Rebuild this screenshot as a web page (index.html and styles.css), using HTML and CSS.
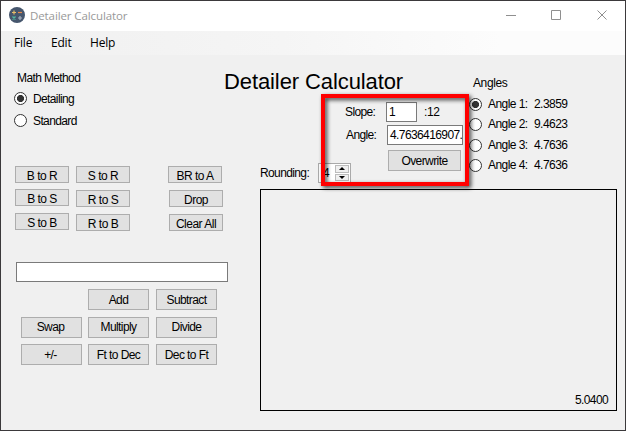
FILE: index.html
```html
<!DOCTYPE html>
<html lang="en">
<head>
<meta charset="utf-8">
<title>Detailer Calculator</title>
<link rel="stylesheet" href="styles.css">
</head>
<body>
<div class="window">
  <header class="titlebar">
    <svg class="app-icon" width="16" height="16" viewBox="0 0 16 16">
      <circle cx="8" cy="8" r="8" fill="#46566d"/>
      <path d="M3 5.500h4M5 3.500v4" stroke="#e5bd68" stroke-width="1.200"/>
      <path d="M9 5.500h4" stroke="#e58a4e" stroke-width="1.200"/>
      <path d="M3.500 9.500l3 3M6.500 9.500l-3 3" stroke="#52b8a0" stroke-width="1.400"/>
      <path d="M9 11h4M11 9v4" stroke="#aab4c2" stroke-width="1.200"/>
    </svg>
    <span class="caption">Detailer Calculator</span>
    <svg class="controls" width="102" height="10" viewBox="0 0 102 10" fill="none" stroke="#8f8f8f">
      <path d="M0 5.500h10"/>
      <path d="M45.500 .5h9v9h-9z"/>
      <path d="M91.500 .5l9 9M100.500 .5l-9 9"/>
    </svg>
  </header>
  <nav class="menu"><span class="file">File</span><span class="edit">Edit</span><span class="help">Help</span></nav>
  <main class="body">
    <section class="left">
      <div class="method">
        <div class="method-title">Math Method</div>
        <label class="option"><i class="radio on"></i><span class="detailing">Detailing</span></label>
        <label class="option"><i class="radio"></i><span class="standard">Standard</span></label>
      </div>
      <div class="convert">
        <div class="stack first"><button>B to R</button><button>B to S</button><button>S to B</button></div>
        <div class="stack second"><button>S to R</button><button>R to S</button><button>R to B</button></div>
        <div class="stack third"><button class="bra">BR to A</button><button>Drop</button><button>Clear All</button></div>
      </div>
      <div class="entry"></div>
      <div class="ops">
        <button class="add">Add</button><button>Subtract</button>
        <button>Swap</button><button>Multiply</button><button>Divide</button>
        <button>+/-</button><button>Ft to Dec</button><button>Dec to Ft</button>
      </div>
    </section>
    <section class="right">
      <div class="upper">
        <div class="settings">
          <h1>Detailer Calculator</h1>
          <div class="line slope"><span class="name">Slope:</span><div class="field small">1</div><span class="ratio">:12</span></div>
          <div class="line angle"><span class="name">Angle:</span><div class="field value">4.7636416907.</div></div>
          <div class="last">
            <div class="rounding"><span>Rounding:</span><div class="spinner"><b>4</b><div class="arrows"><i class="up"></i><i class="down"></i></div></div></div>
            <button class="overwrite">Overwrite</button>
          </div>
        </div>
        <div class="angles">
          <div class="angles-title">Angles</div>
          <label><i class="radio on"></i><span>Angle 1:</span><span>2.3859</span></label>
          <label><i class="radio"></i><span>Angle 2:</span><span>9.4623</span></label>
          <label class="lower"><i class="radio"></i><span>Angle 3:</span><span>4.7636</span></label>
          <label><i class="radio"></i><span>Angle 4:</span><span>4.7636</span></label>
        </div>
      </div>
      <div class="output">5.0400</div>
    </section>
  </main>
  <div class="highlight"></div>
</div>
</body>
</html>
```
FILE: styles.css
```css
* { box-sizing: border-box; }
body { margin: 0; font: 12px/14px "Liberation Sans", sans-serif; letter-spacing: -.62px; color: #000; }
.window { position: relative; width: 626px; height: 431px; border: 1px solid #3b393b; background: #f0f0f0; overflow: hidden; }
.titlebar { display: flex; align-items: center; height: 30px; padding: 0 17px 0 8px; background: #fff; }
.app-icon { margin-top: -2px; }
.caption { margin-left: 5px; font: 11.500px/16px "Open Sans", sans-serif; letter-spacing: -.1px; color: #999; }
.controls { margin-left: auto; margin-top: -2px; }
.menu { display: flex; height: 24px; padding-left: 13px; background: linear-gradient(90deg, #f0f0f0, #f5f5f5 45%, #fcfcfc 80%); font: 12px/24px "Open Sans", sans-serif; letter-spacing: -.2px; }
.file { width: 37px; }
.edit { width: 39px; }
.body { display: flex; }
.left { width: 259px; padding: 16px 0 0 14px; }
.method { height: 95px; }
.method-title { padding-left: 2px; margin-bottom: 6px; }
.option { display: flex; align-items: center; height: 14px; margin: 0 0 8px -1px; }
.option span { margin: 1px 0 0 6px; }
.radio { flex: none; width: 13px; height: 13px; border: 1px solid #333; border-radius: 50%; background: #fff; }
.radio.on { background: radial-gradient(circle, #333 0 3.200px, #fff 3.900px); }
button { display: flex; align-items: center; justify-content: center; margin: 0; padding: 0; border: 1px solid #adadad; background: #e1e1e1; color: #000; font: 12px/14px "Liberation Sans", sans-serif; letter-spacing: -.58px; overflow: hidden; white-space: nowrap; }
.convert { display: flex; height: 96px; }
.stack { display: flex; flex-direction: column; gap: 7px; }
.stack button { width: 54px; height: 17px; padding-top: 3px; letter-spacing: -.5px; }
.first button:nth-child(2) { margin-top: -1px; }
.second { margin-left: 7px; }
.third { margin-left: 38px; }
.third button + button { margin-left: 1px; }
.entry { width: 212px; height: 20px; margin: 0 0 7px 1px; border: 1px solid #7a7a7a; background: #fff; }
.ops { display: grid; grid-template-columns: 61px 61px 61px; grid-template-rows: 21px 21px 21px; column-gap: 7px; row-gap: 6.500px; margin-left: 5px; }
.ops button:nth-child(3), .ops button:nth-child(6) { margin: 0 -1px 0 1px; padding-right: 2px; }
.add { grid-column: 2; }
.right { width: 357px; }
.upper { display: flex; height: 134px; }
.settings { width: 209px; }
h1 { margin: 14px 0 8px -36px; font: 22px/25px "Liberation Sans", sans-serif; letter-spacing: -.1px; white-space: nowrap; }
.line { display: flex; align-items: center; height: 20px; }
.line .name { width: 41px; }
.slope { padding-left: 85px; }
.angle { margin-top: 3px; padding-left: 86px; }
.field { height: 20px; border: 1px solid #7a7a7a; background: #fff; padding: 2px 2px; overflow: hidden; white-space: nowrap; }
.small { width: 31px; }
.value { width: 76px; padding-right: 0; letter-spacing: -.6px; }
.ratio { margin-left: 7px; letter-spacing: -.4px; }
.last { display: flex; align-items: flex-start; padding-top: 5px; }
.rounding { display: flex; align-items: center; height: 20px; margin-top: 13px; width: 128px; }
.rounding > span { width: 58px; }
.spinner { display: flex; justify-content: space-between; width: 33px; height: 20px; padding: 1px 1px 1px 4px; border: 1px solid #aaa; background: #fff; }
.spinner b { font-weight: normal; line-height: 16px; }
.arrows { width: 14px; display: flex; flex-direction: column; gap: 1px; }
.arrows i { display: flex; flex: 1; align-items: center; justify-content: center; border: 1px solid #bcbcbc; background: #f0f0f0; }
.arrows i::after { content: ""; border: 3px solid transparent; border-top-width: 0; border-bottom: 3px solid #000; }
.arrows .down::after { transform: rotate(180deg); }
.overwrite { width: 73px; height: 21px; }
.angles { padding-top: 21px; }
.angles-title { margin: 0 0 4px 4px; letter-spacing: -.4px; }
.angles label { display: flex; align-items: center; height: 20px; letter-spacing: -.55px; }
.angles .lower { margin-top: 1px; }
.angles label span:nth-child(2) { width: 46px; margin-left: 6px; }
.output { display: flex; align-items: flex-end; justify-content: flex-end; height: 222px; padding: 0 8px 3px; border: 1px solid #000; }
.highlight { position: absolute; left: 320px; top: 93px; width: 148px; height: 92px; border: 4px solid #f00; filter: drop-shadow(2px 2px 2px rgba(0,0,0,.75)); }
```
